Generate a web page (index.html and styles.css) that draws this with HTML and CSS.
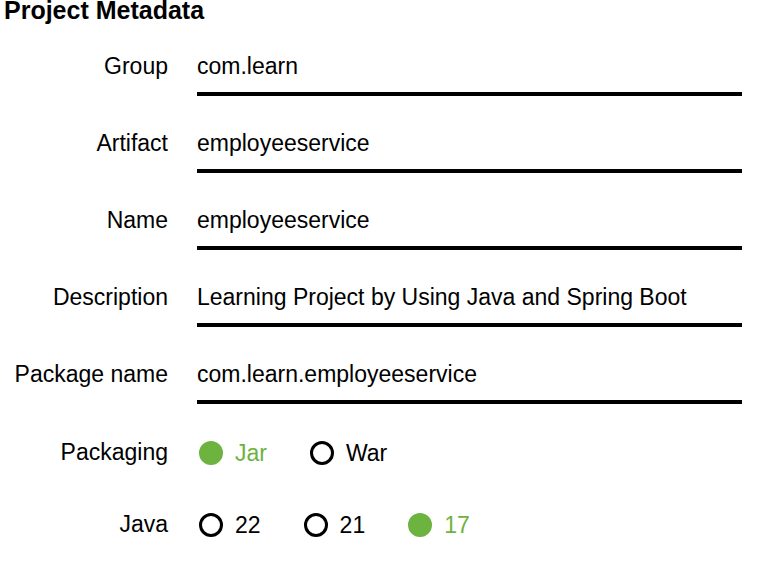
FILE: index.html
```html
<!DOCTYPE html>
<html lang="en">
<head>
<meta charset="utf-8">
<title>Project Metadata</title>
<link rel="stylesheet" href="styles.css">
</head>
<body>
<form class="metadata">
  <h2 class="title">Project Metadata</h2>
  <div class="field"><label class="label" for="group">Group</label><input class="input" id="group" type="text" value="com.learn"></div>
  <div class="field"><label class="label" for="artifact">Artifact</label><input class="input" id="artifact" type="text" value="employeeservice"></div>
  <div class="field"><label class="label" for="name">Name</label><input class="input" id="name" type="text" value="employeeservice"></div>
  <div class="field"><label class="label" for="description">Description</label><input class="input" id="description" type="text" value="Learning Project by Using Java and Spring Boot"></div>
  <div class="field"><label class="label" for="package">Package name</label><input class="input" id="package" type="text" value="com.learn.employeeservice"></div>
  <div class="choices" role="radiogroup" aria-labelledby="packaging">
    <span class="label" id="packaging">Packaging</span>
    <div class="options">
      <label class="option"><input class="radio" type="radio" name="packaging" checked><span>Jar</span></label>
      <label class="option"><input class="radio" type="radio" name="packaging"><span>War</span></label>
    </div>
  </div>
  <div class="choices" role="radiogroup" aria-labelledby="java">
    <span class="label" id="java">Java</span>
    <div class="options">
      <label class="option"><input class="radio" type="radio" name="java"><span>22</span></label>
      <label class="option"><input class="radio" type="radio" name="java"><span>21</span></label>
      <label class="option"><input class="radio" type="radio" name="java" checked><span>17</span></label>
    </div>
  </div>
</form>
</body>
</html>
```

FILE: styles.css
```css
* {
  box-sizing: border-box;
}

body {
  margin: 0;
  background: #fff;
  color: #000;
  font-family: "Liberation Sans", Arial, sans-serif;
  font-size: 23px;
  line-height: 28px;
}

.metadata {
  padding: 0 21px 0 4px;
}

.title {
  margin: -4px 0 13px;
  font-size: 25px;
  line-height: 28px;
}

.field,
.choices {
  display: grid;
  grid-template-columns: 164px 1fr;
  column-gap: 29px;
}

.field {
  height: 59px;
  margin-bottom: 18px;
}

.label {
  padding-top: 15px;
  text-align: right;
}

.input {
  width: 100%;
  min-width: 0;
  height: 59px;
  padding: 4px 0 0;
  border: 0;
  border-bottom: 4px solid #000;
  border-radius: 0;
  outline: 0;
  background: none;
  color: inherit;
  font: inherit;
}

.choices {
  height: 54px;
  margin-bottom: 18px;
}

.choices .label {
  padding-top: 16px;
}

.options {
  display: flex;
  gap: 43px;
  padding: 17px 0 0 2px;
}

.option {
  display: flex;
  align-items: center;
  gap: 12px;
  height: 28px;
}

.option:has(:checked) {
  color: #6db33f;
}

.radio {
  appearance: none;
  width: 24px;
  height: 24px;
  margin: 0;
  border: 3px solid #000;
  border-radius: 50%;
}

.radio:checked {
  border-color: #6db33f;
  background: #6db33f;
}
```
